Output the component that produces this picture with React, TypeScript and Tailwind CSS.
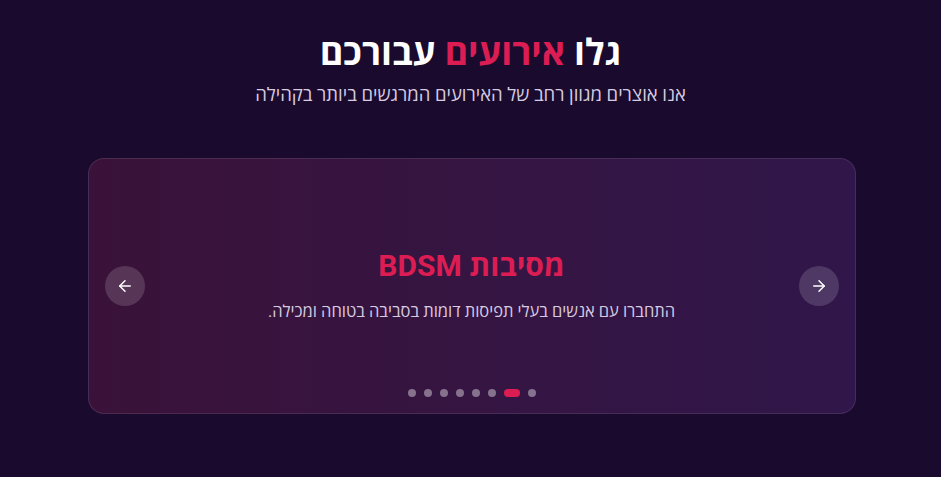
import { ArrowLeft, ArrowRight } from "lucide-react";

const dots = [0, 1, 2, 3, 4, 5, 6, 7];
const active = 1;

function EventsSlider() {
  return (
    <div className="relative mx-auto mt-[49px] h-64 w-[768px] translate-x-[1px] overflow-hidden rounded-2xl border border-white/10 bg-gradient-to-r from-[#3a1239] to-[#30164a]">
      <div className="flex h-full flex-col items-center justify-center">
        <h3 className="text-[30px] font-bold leading-9 text-[#dc1d53]">מסיבות BDSM</h3>
        <p className="mt-4 text-[16.5px] text-[#d6cbe0]">התחברו עם אנשים בעלי תפיסות דומות בסביבה בטוחה ומכילה.</p>
      </div>

      <button className="absolute right-4 top-1/2 flex h-10 w-10 -translate-y-1/2 items-center justify-center rounded-full bg-white/15 text-white">
        <ArrowRight size={18} strokeWidth={2} />
      </button>
      <button className="absolute left-4 top-1/2 flex h-10 w-10 -translate-y-1/2 items-center justify-center rounded-full bg-white/15 text-white">
        <ArrowLeft size={18} strokeWidth={2} />
      </button>

      <div className="absolute bottom-4 left-0 right-0 flex justify-center gap-2">
        {dots.map((d) =>
          d === active ? (
            <span key={d} className="h-2 w-4 rounded-full bg-[#dc1d53]" />
          ) : (
            <span key={d} className="h-2 w-2 rounded-full bg-white/40" />
          )
        )}
      </div>
    </div>
  );
}

export default function App() {
  return (
    <div dir="rtl" className="min-h-[477px] w-full bg-[#1a0b2e] pt-[33px] font-['Roboto','Open_Sans','DejaVu_Sans',sans-serif]">
      <h2 className="text-center text-4xl font-bold leading-10 text-white">
        גלו <span className="text-[#dc1d53]">אירועים</span> עבורכם
      </h2>
      <p className="mt-2 text-center text-[18.5px] leading-7 text-[#d6cbe0]">אנו אוצרים מגוון רחב של האירועים המרגשים ביותר בקהילה</p>
      <EventsSlider />
    </div>
  );
}
